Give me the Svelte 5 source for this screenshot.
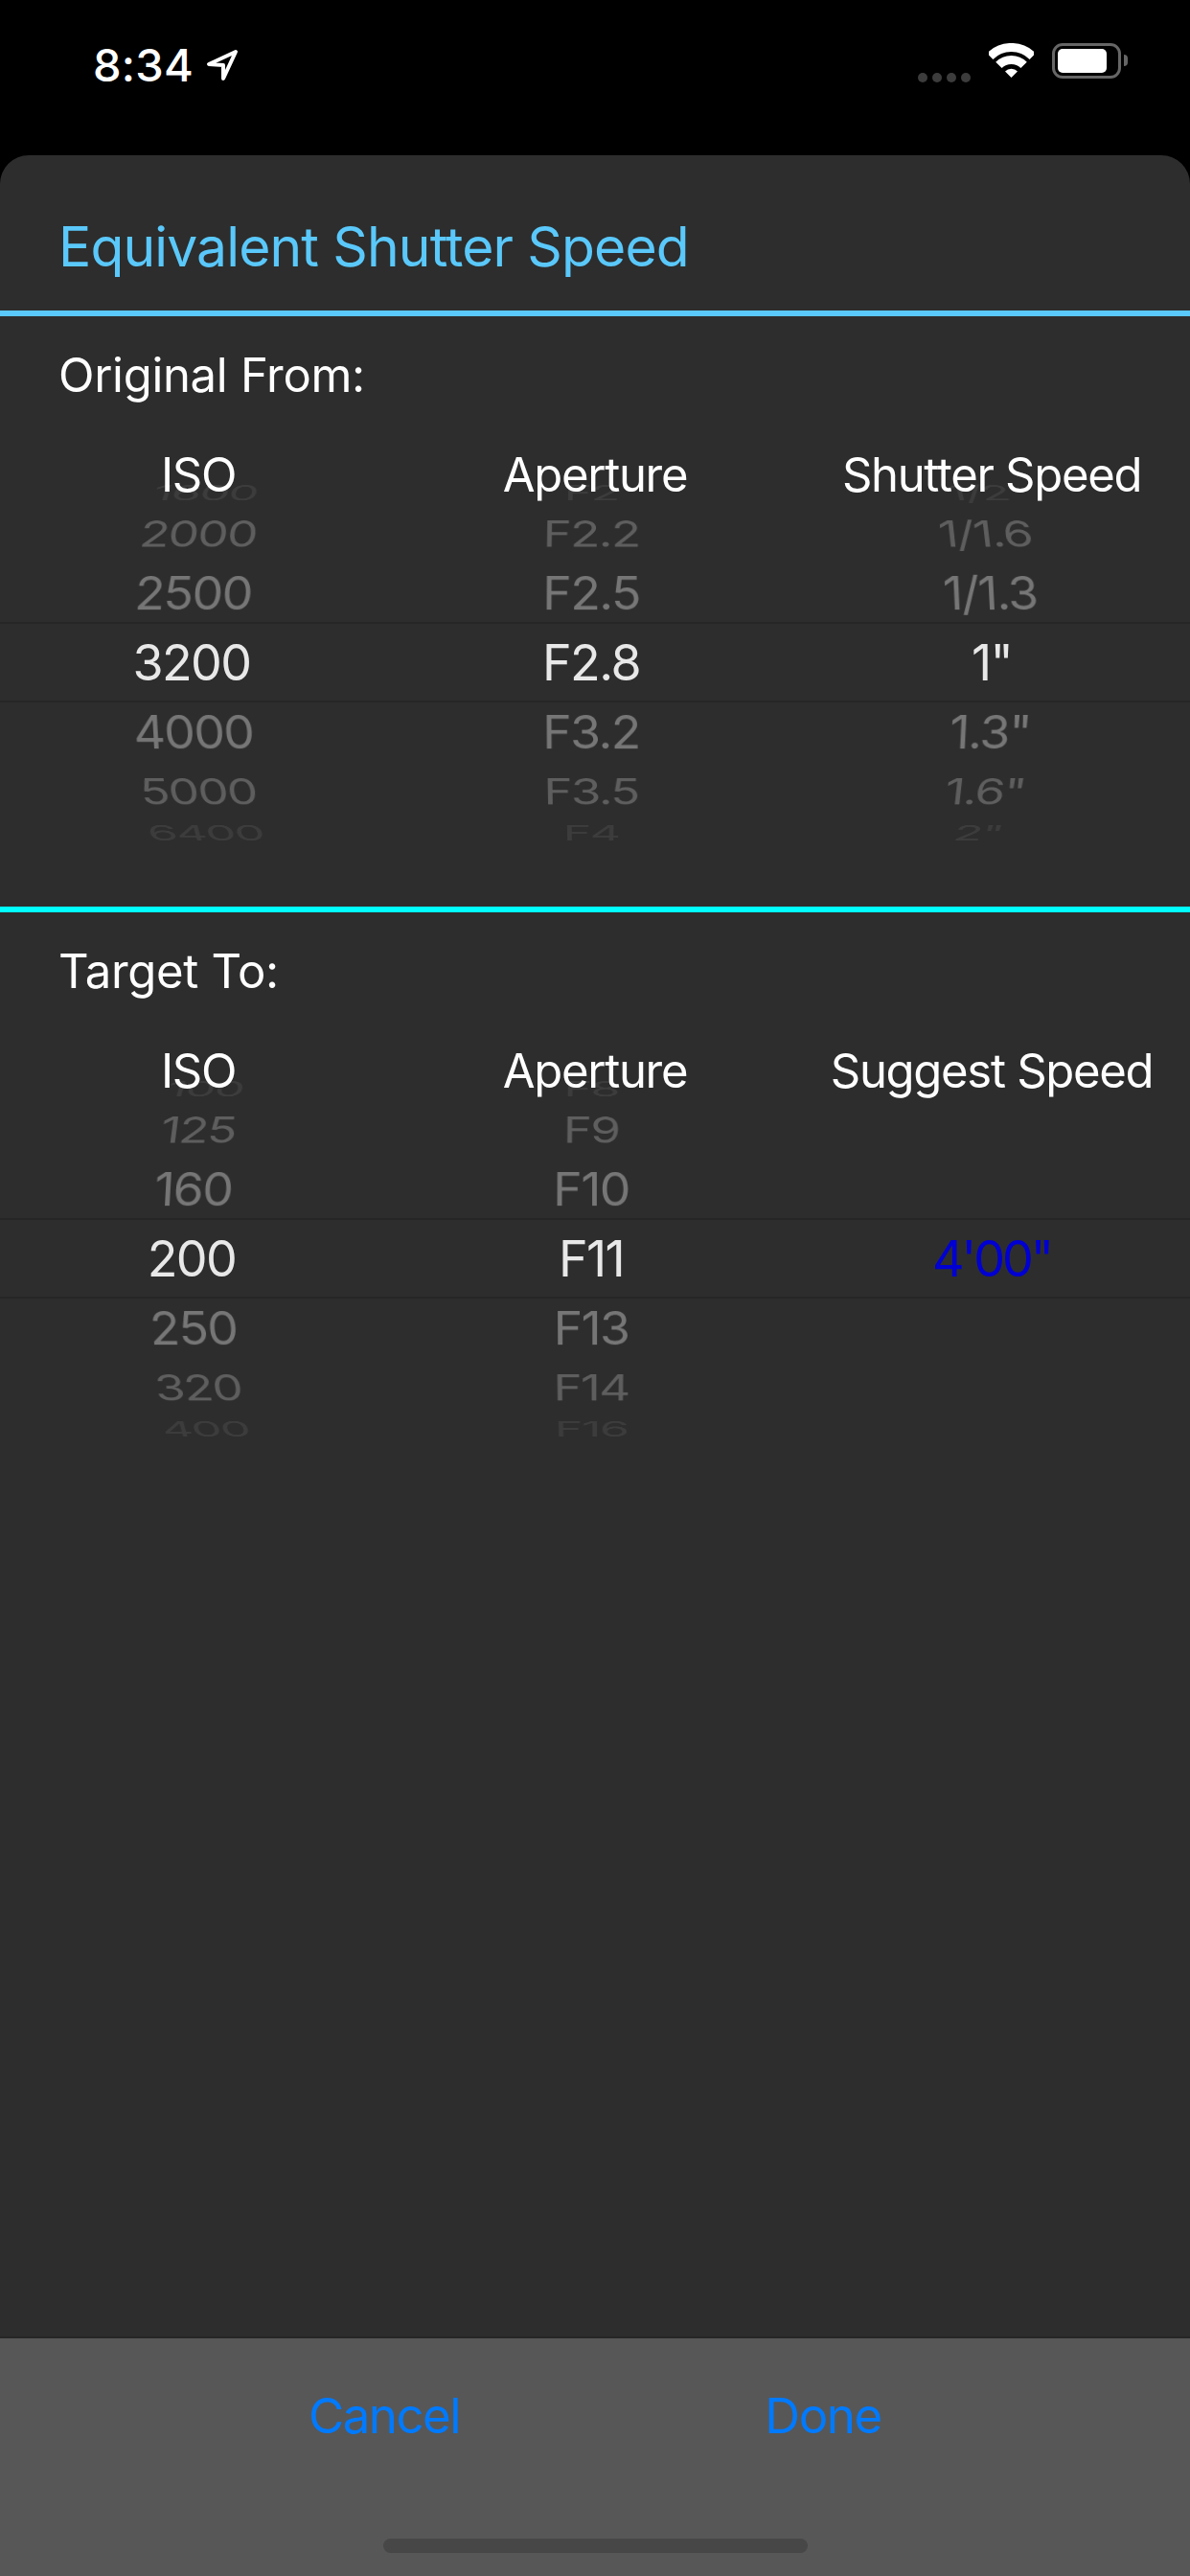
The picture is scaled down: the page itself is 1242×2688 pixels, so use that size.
<script>
  const STEP = 20.2;
  const RADIUS = 211;

  const pickers = [
    {
      label: "Original From:",
      heads: ["ISO", "Aperture", "Shutter Speed"],
      cols: [
        ["1600", "2000", "2500", "3200", "4000", "5000", "6400"],
        ["F2", "F2.2", "F2.5", "F2.8", "F3.2", "F3.5", "F4"],
        ['1/2', '1/1.6', '1/1.3', '1"', '1.3"', '1.6"', '2"']
      ]
    },
    {
      label: "Target To:",
      heads: ["ISO", "Aperture", "Suggest Speed"],
      cols: [
        ["100", "125", "160", "200", "250", "320", "400"],
        ["F8", "F9", "F10", "F11", "F13", "F14", "F16"],
        ["", "", "", "4'00\"", "", "", ""]
      ],
      result: true
    }
  ];

  const shades = ["#e8e8e8", "#767676", "#5e5e5e", "#3c3c3c"];

  function rowStyle(i) {
    const k = i - 3;
    return `transform: translateZ(-${RADIUS}px) rotateX(${-k * STEP}deg) translateZ(${RADIUS}px); color: ${shades[Math.abs(k)]};`;
  }
</script>

<div class="screen">
  <div class="status">
    <div class="clock">
      <span class="time">8:34</span>
      <svg class="arrow" width="34" height="34" viewBox="0 0 34 34">
        <path d="M31 3 L3 16 L18 17 L18 31 Z" fill="none" stroke="#fff" stroke-width="4" stroke-linejoin="round" />
      </svg>
    </div>
    <div class="indicators">
      <div class="signal"><i></i><i></i><i></i><i></i></div>
      <svg class="wifi" width="47" height="36" viewBox="0 0 47 36">
        <path d="M1.2 13.7 A31.5 31.5 0 0 1 45.8 13.7" fill="none" stroke="#fff" stroke-width="9" />
        <path d="M10.4 22.9 A18.5 18.5 0 0 1 36.6 22.9" fill="none" stroke="#fff" stroke-width="9" />
        <path d="M23.5 36 L17 29.6 A9 9 0 0 1 30 29.6 Z" fill="#fff" />
      </svg>
      <div class="battery"><div class="charge"></div></div>
      <div class="nub"></div>
    </div>
  </div>

  <div class="sheet">
    <h1 class="title">Equivalent Shutter Speed</h1>

    {#each pickers as p, n}
      <section class="section" class:cyan={n === 1}>
        <div class="label">{p.label}</div>
        <div class="wheel-wrap">
          <div class="picker">
            <div class="band"></div>
            {#each p.cols as col, c}
              <div class="col col-{c}">
                {#each col as value, i}
                  <div class="row" class:result={p.result && c === 2} style={rowStyle(i)}>{value}</div>
                {/each}
              </div>
            {/each}
          </div>
          <div class="heads">
            {#each p.heads as h}
              <div class="head">{h}</div>
            {/each}
          </div>
        </div>
      </section>
    {/each}
  </div>

  <div class="footer">
    <div class="buttons">
      <div class="btn">Cancel</div>
      <div class="btn">Done</div>
    </div>
    <div class="home"></div>
  </div>
</div>

<style>
  :global(body) {
    margin: 0;
    background: #000;
  }
  .screen {
    width: 1242px;
    height: 2688px;
    display: flex;
    flex-direction: column;
    background: #000;
    overflow: hidden;
    font-family: Inter, "Liberation Sans", sans-serif;
    color: #fff;
  }
  .status {
    height: 162px;
    box-sizing: border-box;
    padding: 40px 65px 0 97px;
    display: flex;
    justify-content: space-between;
    align-items: flex-start;
  }
  .clock {
    display: flex;
    align-items: center;
    gap: 13px;
  }
  .time {
    font-size: 47px;
    font-weight: 500;
    line-height: 56px;
    letter-spacing: 0.2px;
  }
  .indicators {
    display: flex;
    align-items: center;
    height: 46px;
  }
  .signal {
    display: flex;
    gap: 5px;
    align-self: flex-end;
    margin-right: 19px;
  }
  .signal i {
    width: 10px;
    height: 10px;
    border-radius: 5px;
    background: #3c3c3c;
  }
  .wifi {
    margin-right: 19px;
  }
  .battery {
    width: 72px;
    height: 37px;
    box-sizing: border-box;
    border: 3px solid #666;
    border-radius: 11px;
    padding: 3px;
  }
  .charge {
    width: 51px;
    height: 25px;
    background: #fff;
    border-radius: 5px;
  }
  .nub {
    width: 4px;
    height: 12px;
    margin-left: 3px;
    background: #666;
    border-radius: 0 4px 4px 0;
  }
  .sheet {
    flex: 1;
    background: #2d2d2d;
    border-radius: 30px 30px 0 0;
  }
  .title {
    margin: 0;
    height: 162px;
    box-sizing: border-box;
    padding: 61px 0 0 61px;
    font-size: 57px;
    font-weight: 400;
    line-height: 70px;
    letter-spacing: -0.87px;
    color: #5ac8fa;
  }
  .section {
    border-top: 6px solid #5ac8fa;
    height: 622px;
    box-sizing: border-box;
  }
  .section.cyan {
    border-top-color: #00ffff;
  }
  .label {
    height: 118px;
    box-sizing: border-box;
    padding: 32px 0 0 61px;
    font-size: 49px;
    line-height: 60px;
    letter-spacing: -0.3px;
  }
  .wheel-wrap {
    position: relative;
    height: 486px;
  }
  .picker {
    height: 100%;
    display: grid;
    grid-template-columns: repeat(3, 1fr);
    grid-template-rows: 1fr;
    perspective: 3000px;
    perspective-origin: 50% 50%;
    overflow: hidden;
  }
  .band {
    grid-row: 1;
    grid-column: 1 / -1;
    align-self: center;
    height: 80px;
    border-top: 2px solid #262626;
    border-bottom: 2px solid #262626;
  }
  .col {
    grid-row: 1;
    display: grid;
    padding-top: 2px;
    transform-style: preserve-3d;
  }
  .col-0 {
    grid-column: 1;
    padding-right: 14px;
  }
  .col-1 {
    grid-column: 2;
    padding-right: 8px;
  }
  .col-2 {
    grid-column: 3;
  }
  .row {
    grid-area: 1 / 1;
    align-self: center;
    height: 60px;
    font-size: 52px;
    line-height: 60px;
    letter-spacing: -1.6px;
    text-align: center;
    backface-visibility: hidden;
  }
  .row.result {
    color: #0000d2 !important;
    letter-spacing: -3px;
  }
  .heads {
    position: absolute;
    top: 18px;
    left: 0;
    right: 0;
    display: grid;
    grid-template-columns: repeat(3, 1fr);
  }
  .head {
    text-align: center;
    font-size: 49px;
    line-height: 60px;
    letter-spacing: -1.3px;
  }
  .footer {
    height: 250px;
    box-sizing: border-box;
    border-top: 2px solid #262626;
    background: #575757;
    display: flex;
    flex-direction: column;
    align-items: center;
  }
  .buttons {
    width: 100%;
    box-sizing: border-box;
    padding: 50px 154px 0 172px;
    display: grid;
    grid-template-columns: 1fr 1fr;
  }
  .btn {
    text-align: center;
    font-size: 51px;
    line-height: 62px;
    letter-spacing: -1.5px;
    color: #007aff;
  }
  .home {
    width: 443px;
    height: 15px;
    margin-top: 97px;
    border-radius: 8px;
    background: #474747;
  }
</style>
